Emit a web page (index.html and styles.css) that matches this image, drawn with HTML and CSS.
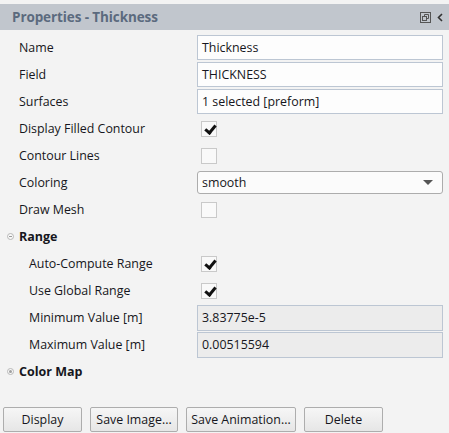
FILE: index.html
```html
<!DOCTYPE html>
<html>
<head>
<meta charset="utf-8">
<link rel="stylesheet" href="styles.css">
</head>
<body>
<div class="panel">
  <div class="header">
    <span class="title">Properties - Thickness</span>
    <span class="hicons">
      <svg class="undock" width="11" height="11" viewBox="0 0 11 11">
        <rect x="0.5" y="0.5" width="10" height="10" fill="none" stroke="#555" stroke-width="1"/>
        <rect x="2.5" y="4.5" width="4" height="4" fill="none" stroke="#555" stroke-width="1"/>
        <path d="M4.5 4.5 V2.5 H8.5 V6.5 H6.5" fill="none" stroke="#555" stroke-width="1"/>
      </svg>
      <svg class="chev" width="6" height="9" viewBox="0 0 6 9">
        <path d="M5 1 L1.5 4.5 L5 8" fill="none" stroke="#333" stroke-width="1.6"/>
      </svg>
    </span>
  </div>
  <div class="rows">
    <div class="row"><span class="label">Name</span><div class="field">Thickness</div></div>
    <div class="row"><span class="label">Field</span><div class="field">THICKNESS</div></div>
    <div class="row"><span class="label">Surfaces</span><div class="field">1 selected [preform]</div></div>
    <div class="row"><span class="label">Display Filled Contour</span><div class="cb checked"></div></div>
    <div class="row"><span class="label">Contour Lines</span><div class="cb"></div></div>
    <div class="row"><span class="label">Coloring</span><div class="select"><span>smooth</span><span class="tri"></span></div></div>
    <div class="row"><span class="label">Draw Mesh</span><div class="cb"></div></div>
    <div class="row group"><span class="gicon minus"></span><span class="glabel">Range</span></div>
    <div class="row sub"><span class="label">Auto-Compute Range</span><div class="cb checked"></div></div>
    <div class="row sub"><span class="label">Use Global Range</span><div class="cb checked"></div></div>
    <div class="row sub"><span class="label">Minimum Value [m]</span><div class="field ro">3.83775e-5</div></div>
    <div class="row sub"><span class="label">Maximum Value [m]</span><div class="field ro">0.00515594</div></div>
    <div class="row group"><span class="gicon dot"></span><span class="glabel">Color Map</span></div>
  </div>
  <div class="buttons">
    <button class="btn w1">Display</button>
    <button class="btn w2">Save Image...</button>
    <button class="btn w3">Save Animation...</button>
    <button class="btn w4">Delete</button>
  </div>
</div>
</body>
</html>
```
FILE: styles.css
```css
html, body {
  margin: 0;
  padding: 0;
  background: #f3f3f3;
}
body {
  font-family: "Open Sans", "Noto Sans", sans-serif;
  font-size: 12.4px;
  color: #161620;
}
.panel {
  width: 449px;
  height: 433px;
  padding-top: 4px;
  box-sizing: border-box;
  background: #f3f3f3;
}
.header {
  height: 26px;
  background: #c1c6cd;
  display: flex;
  align-items: center;
  justify-content: space-between;
  padding: 0 6px 0 12px;
}
.title {
  font-weight: bold;
  font-size: 13.5px;
  color: #5b6a7e;
  letter-spacing: -0.1px;
}
.hicons {
  display: flex;
  align-items: center;
  gap: 6px;
}
.rows {
  padding-top: 4px;
}
.row {
  height: 27px;
  display: grid;
  grid-template-columns: 178px 246px;
  align-items: center;
  padding-left: 19px;
}
.row.sub {
  padding-left: 29px;
  grid-template-columns: 168px 246px;
}
.field {
  height: 23px;
  border: 1px solid #bcc6d3;
  background: #fdfdfd;
  line-height: 23px;
  padding-left: 4px;
  box-sizing: content-box;
  width: 240px;
}
.field.ro {
  background: #ececec;
  height: 24px;
  line-height: 24px;
}
.cb {
  width: 14px;
  height: 14px;
  margin-left: 4px;
  border: 1px solid #c9c9c9;
  background: #f9f9f9;
  position: relative;
}
.cb.checked::after {
  content: "";
  position: absolute;
  left: 5px;
  top: 1px;
  width: 4px;
  height: 8px;
  border-right: 3px solid #111;
  border-bottom: 3px solid #111;
  transform: rotate(40deg);
}
.select {
  height: 21px;
  border: 1px solid #acacac;
  border-radius: 3px;
  background: #fbfbfb;
  display: flex;
  align-items: center;
  justify-content: space-between;
  padding: 0 9px 0 4px;
  width: 231px;
}
.tri {
  width: 0;
  height: 0;
  border-left: 5px solid transparent;
  border-right: 5px solid transparent;
  border-top: 5px solid #555;
}
.row.group {
  display: flex;
  padding-left: 7px;
  gap: 5px;
}
.glabel {
  font-weight: bold;
  font-size: 12.5px;
}
.gicon {
  width: 5px;
  height: 5px;
  border: 1px solid #b8b8b8;
  border-radius: 50%;
  position: relative;
  background: #f8f8f8;
}
.gicon.minus::after {
  content: "";
  position: absolute;
  left: 1px;
  top: 2px;
  width: 3px;
  height: 1px;
  background: #9a9a9a;
}
.gicon.dot::after {
  content: "";
  position: absolute;
  left: 1px;
  top: 1px;
  width: 3px;
  height: 3px;
  border-radius: 50%;
  background: #a0a0a0;
}
.buttons {
  margin-top: 22px;
  padding-left: 3px;
  display: flex;
  gap: 8px;
}
.btn {
  height: 25px;
  font-family: "Open Sans", "Noto Sans", sans-serif;
  font-size: 12.4px;
  color: #161620;
  border: 1px solid #adadad;
  border-radius: 2px;
  background: linear-gradient(#f6f6f6, #e6e6e6);
  padding: 0;
}
.w1 { width: 79px; }
.w2 { width: 88px; }
.w3 { width: 110px; }
.w4 { width: 79px; }
```
